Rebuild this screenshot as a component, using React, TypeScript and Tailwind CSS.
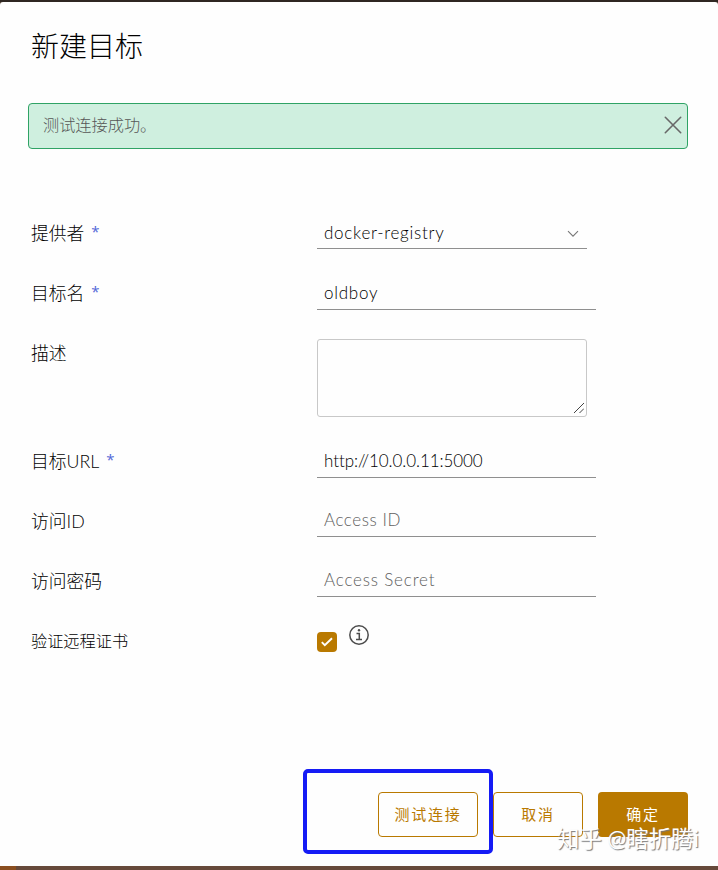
import type { ReactNode } from "react";

function Row({ label, required, className, children }: { label: string; required?: boolean; className: string; children: ReactNode }) {
  return (
    <div className={`flex items-start ${className}`}>
      <label className="-ml-px mr-px flex w-[285px] shrink-0 text-[17.8px] leading-[26px] text-black whitespace-nowrap">
        {label}
        {required && <span className="-mt-0.5 ml-[7px] font-['Open_Sans',sans-serif] text-[15px] font-normal leading-[26px] text-[#5468d8]">*</span>}
      </label>
      {children}
    </div>
  );
}

const field = "flex items-start border-b border-[#8f8f8f] pl-[7px] text-[17px] leading-[26px]";

export default function App() {
  return (
    <div className="relative flex h-[870px] w-[718px] flex-col overflow-hidden bg-[#4a3a2e] font-light font-[Lato,'Noto_Sans_CJK_SC',sans-serif]">
      <div className="h-0.5 shrink-0 bg-[#2f2722]" />
      <main className="flex h-[864px] shrink-0 flex-col rounded-t-[3px] bg-[#fefefe] pl-8">
        <h1 className="mt-6 -ml-px h-10 text-[28px] leading-10 font-extralight text-black">新建目标</h1>
        <div className="mt-[37px] -ml-1 flex h-[46px] w-[660px] shrink-0 justify-between rounded-[4px] border border-[#2fa365] bg-[#cfefdf] pr-[5px] pl-[14px]">
          <span className="text-[16.2px] leading-[42px] text-[#565656]">测试连接成功。</span>
          <svg className="mt-3 h-[18px] w-[18px]" viewBox="0 0 18 18" fill="none" stroke="#686868" strokeWidth="1.6" strokeLinecap="round">
            <path d="M1.3 1.3 16.7 16.7M16.7 1.3 1.3 16.7" />
          </svg>
        </div>

        <form className="mt-[69px] flex flex-col">
          <Row label="提供者" required className="h-[60px] pt-[2px]">
            <div className={`${field} h-[29px] w-[270px] justify-between pr-2 text-black`}>
              <span className="tracking-[0.74px]">docker-registry</span>
              <svg className="mt-[10px] h-[8px] w-[12px]" viewBox="0 0 12 8" fill="none" stroke="#777" strokeWidth="1.1">
                <path d="m1 1.2 5 5 5-5" />
              </svg>
            </div>
          </Row>
          <Row label="目标名" required className="h-[60px] pt-[2px]">
            <div className={`${field} h-[30px] w-[279px] text-black`}><span className="tracking-[0.74px]">oldboy</span></div>
          </Row>
          <Row label="描述" className="h-[108px] pt-[2px]">
            <div className="relative -mt-[1px] h-[78px] w-[270px]">
              <textarea className="block h-full w-full resize-none rounded-[3px] border border-[#c8c8c8]" />
              <svg className="absolute right-[3px] bottom-1 size-[10px]" viewBox="0 0 10 10" stroke="#444" strokeWidth="1">
                <path d="M0 10 10 0M5.5 10 10 5.5" />
              </svg>
            </div>
          </Row>
          <Row label="目标URL" required className="h-[60px] pt-[2px]">
            <div className={`${field} h-[30px] w-[279px] text-black`}><span className="tracking-[-0.07px]">http://10.0.0.11:5000</span></div>
          </Row>
          <Row label="访问ID" className="h-[60px] pt-[2px]">
            <div className={`${field} h-[29px] w-[279px] text-[#606060]`}><span className="-mt-px tracking-[0.55px]">Access ID</span></div>
          </Row>
          <Row label="访问密码" className="h-[60px] pt-[2px]">
            <div className={`${field} h-[29px] w-[279px] text-[#606060]`}><span className="-mt-px tracking-[0.82px]">Access Secret</span></div>
          </Row>
          <div className="flex h-[60px] items-start pt-[2px]">
            <label className="-ml-px mr-px w-[285px] text-[16.2px] leading-[26px] text-black">验证远程证书</label>
            <span className="mt-1 flex size-5 items-center justify-center rounded-[4px] bg-[#b97900]">
              <svg className="h-3 w-3" viewBox="0 0 12 12" fill="none" stroke="white" strokeWidth="1.9"><path d="m.8 6.2 3 3 7.2-7" /></svg>
            </span>
            <svg className="-mt-[3px] ml-3 size-5" viewBox="0 0 20 20" fill="none" stroke="#4c4c4c" strokeWidth="1.5">
              <circle cx="10" cy="10" r="9.2" />
              <circle cx="10" cy="5.2" r="1.2" fill="#4c4c4c" stroke="none" />
              <path d="M7.5 8.6h2.8v6M7 14.6h6" />
            </svg>
          </div>
        </form>

        <footer className="mt-[106px] flex h-[45px] pl-[346px] text-[15px] font-normal tracking-[1.7px] text-[#b97900]">
          <button className="w-[100px] rounded-[4px] border border-[#b97900]">测试连接</button>
          <button className="ml-[15px] w-[90px] rounded-[4px] border border-[#b97900]">取消</button>
          <button className="ml-[15px] w-[90px] rounded-[4px] bg-[#b97900] text-white">确定</button>
        </footer>
      </main>
      <div className="flex h-1 shrink-0">
        <div className="w-4 bg-[#8a4e20]" />
        <div className="flex-1 bg-[#66493a]" />
      </div>
      <div className="absolute top-[768.5px] left-[302.5px] h-[85px] w-[190px] rounded-[5px] border-4 border-[#151bf5]" />
      <div className="absolute top-[824px] left-[557px] text-[22.4px] leading-[30px] font-normal whitespace-nowrap text-white [text-shadow:1px_1px_1px_#777]">
        知乎 @瞎折腾i
      </div>
    </div>
  );
}
